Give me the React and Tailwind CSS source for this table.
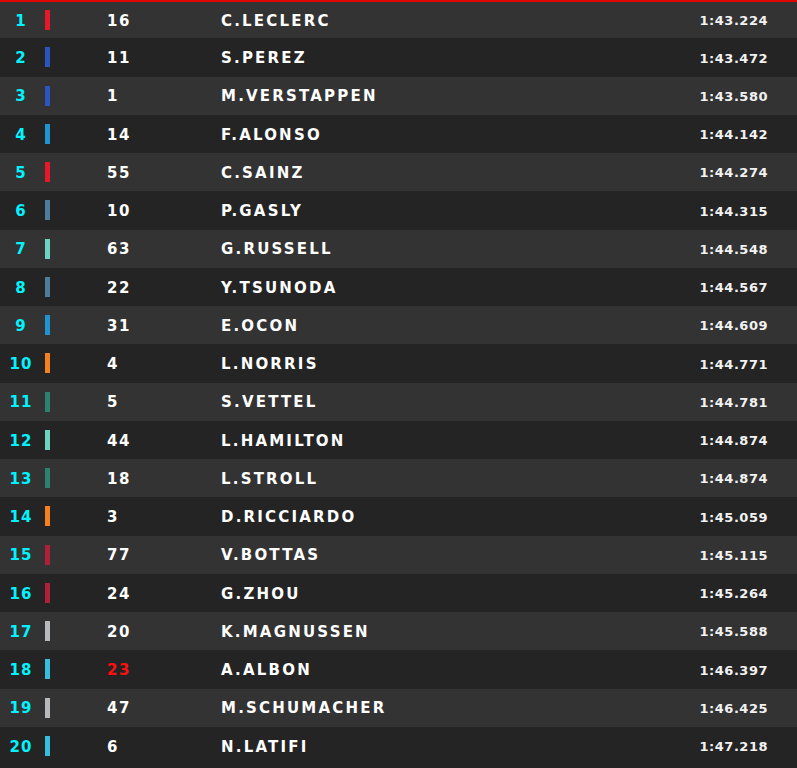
const rows = [
  { pos: 1, num: "16", name: "C.LECLERC", time: "1:43.224", color: "#e8182a" },
  { pos: 2, num: "11", name: "S.PEREZ", time: "1:43.472", color: "#2b55c0" },
  { pos: 3, num: "1", name: "M.VERSTAPPEN", time: "1:43.580", color: "#2b55c0" },
  { pos: 4, num: "14", name: "F.ALONSO", time: "1:44.142", color: "#2293d1" },
  { pos: 5, num: "55", name: "C.SAINZ", time: "1:44.274", color: "#e8182a" },
  { pos: 6, num: "10", name: "P.GASLY", time: "1:44.315", color: "#4e7c9b" },
  { pos: 7, num: "63", name: "G.RUSSELL", time: "1:44.548", color: "#6cd3bf" },
  { pos: 8, num: "22", name: "Y.TSUNODA", time: "1:44.567", color: "#4e7c9b" },
  { pos: 9, num: "31", name: "E.OCON", time: "1:44.609", color: "#2293d1" },
  { pos: 10, num: "4", name: "L.NORRIS", time: "1:44.771", color: "#f58020" },
  { pos: 11, num: "5", name: "S.VETTEL", time: "1:44.781", color: "#2d826d" },
  { pos: 12, num: "44", name: "L.HAMILTON", time: "1:44.874", color: "#6cd3bf" },
  { pos: 13, num: "18", name: "L.STROLL", time: "1:44.874", color: "#2d826d" },
  { pos: 14, num: "3", name: "D.RICCIARDO", time: "1:45.059", color: "#f58020" },
  { pos: 15, num: "77", name: "V.BOTTAS", time: "1:45.115", color: "#b12039" },
  { pos: 16, num: "24", name: "G.ZHOU", time: "1:45.264", color: "#b12039" },
  { pos: 17, num: "20", name: "K.MAGNUSSEN", time: "1:45.588", color: "#b6babd" },
  { pos: 18, num: "23", name: "A.ALBON", time: "1:46.397", color: "#37bedd", red: true },
  { pos: 19, num: "47", name: "M.SCHUMACHER", time: "1:46.425", color: "#b6babd" },
  { pos: 20, num: "6", name: "N.LATIFI", time: "1:47.218", color: "#37bedd" },
];

export default function App() {
  return (
    <div className="w-[797px] h-[768px] bg-[#242424] font-['DejaVu_Sans',sans-serif] font-bold">
      {rows.map((r, i) => (
        <div
          key={r.pos}
          className={
            "flex items-center h-[38.25px] " +
            (i % 2 === 0 ? "bg-[#333333] " : "bg-[#242424] ") +
            (i === 0 ? "border-t-2 border-[#e10600]" : "")
          }
        >
          <div className="w-[42px] mt-[2px] text-center text-[15px] tracking-[1px] text-[#00f4ff]">{r.pos}</div>
          <div className="w-[5px] h-[20px] ml-[3px]" style={{ backgroundColor: r.color }} />
          <div className={"w-[114px] ml-[57px] mt-[2px] text-[15px] tracking-[1.5px] " + (r.red ? "text-[#ff1010]" : "text-white")}>
            {r.num}
          </div>
          <div className="flex-1 mt-[2px] text-[15px] tracking-[2.2px] text-white">{r.name}</div>
          <div className="pr-[29px] mt-[2px] text-[13px] tracking-[0.5px] text-[#f2f2f2]">{r.time}</div>
        </div>
      ))}
    </div>
  );
}
